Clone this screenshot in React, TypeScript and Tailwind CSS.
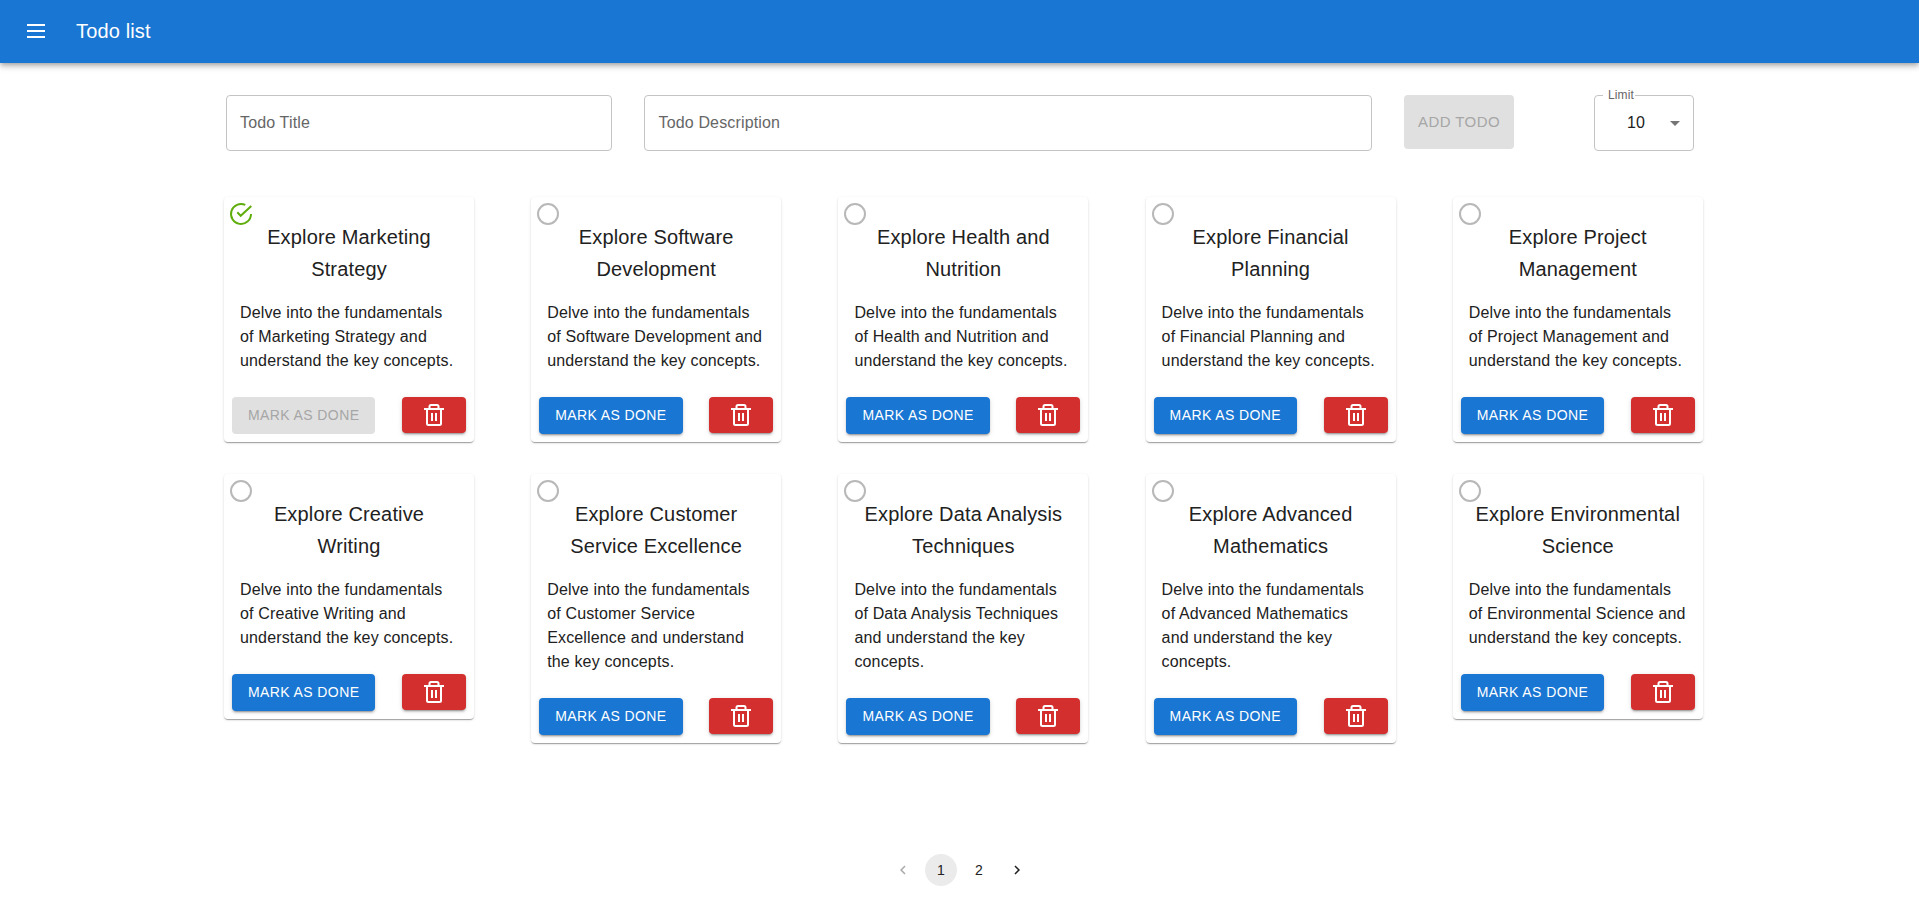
import React from "react";

const todos = [
  { topic: "Marketing Strategy", done: true },
  { topic: "Software Development", done: false },
  { topic: "Health and Nutrition", done: false },
  { topic: "Financial Planning", done: false },
  { topic: "Project Management", done: false },
  { topic: "Creative Writing", done: false },
  { topic: "Customer Service Excellence", done: false },
  { topic: "Data Analysis Techniques", done: false },
  { topic: "Advanced Mathematics", done: false },
  { topic: "Environmental Science", done: false },
];

const raised =
  "shadow-[0px_3px_1px_-2px_rgba(0,0,0,0.2),0px_2px_2px_0px_rgba(0,0,0,0.14),0px_1px_5px_0px_rgba(0,0,0,0.12)]";

function StatusIcon({ done }: { done: boolean }) {
  return (
    <div className="absolute left-1 top-1 size-[26px]">
      {done ? (
        <svg viewBox="0 0 26 26" className="size-full fill-none stroke-[#5fad0c] stroke-2">
          <path d="M23 13A10 10 0 1 1 17.3 3.95M23.3 5 12.7 14.8 9.3 11.3" />
        </svg>
      ) : (
        <svg viewBox="0 0 26 26" className="size-full fill-none stroke-[#b8b8b8] stroke-2">
          <circle cx="13" cy="13" r="10" />
        </svg>
      )}
    </div>
  );
}

function TrashIcon() {
  return (
    <svg viewBox="0 0 24 24" className="size-6 fill-none stroke-white stroke-2">
      <path d="M2 6h20M5 6v14.5A1.5 1.5 0 0 0 6.5 22h11a1.5 1.5 0 0 0 1.5-1.5V6M7.5 6V3.5A1.5 1.5 0 0 1 9 2h6A1.5 1.5 0 0 1 16.5 3.5V6M10 10v8M14 10v8" />
    </svg>
  );
}

function TodoCard({ topic, done }: { topic: string; done: boolean }) {
  return (
    <article className="relative w-[250px] rounded bg-white shadow-[0px_2px_1px_-1px_rgba(0,0,0,0.2),0px_1px_1px_0px_rgba(0,0,0,0.14),0px_1px_3px_0px_rgba(0,0,0,0.12)]">
      <StatusIcon done={done} />
      <div className="px-4 pb-4 pt-6">
        <h2 className="mb-4 text-center text-[20px] font-normal leading-8 tracking-[0.15px]">{`Explore ${topic}`}</h2>
        <p className="text-base leading-6 tracking-[0.15px]">
          {`Delve into the fundamentals of ${topic} and understand the key concepts.`}
        </p>
      </div>
      <div className="flex items-start justify-between p-2">
        <button
          disabled={done}
          className={
            done
              ? "h-[36.5px] rounded bg-[#e0e0e0] px-4 text-[14px] tracking-[0.4px] text-[#a6a6a6]"
              : "h-[36.5px] rounded bg-[#1976d2] px-4 text-[14px] tracking-[0.4px] text-white " + raised
          }
        >
          MARK AS DONE
        </button>
        <button className={"flex h-9 w-16 items-center justify-center rounded bg-[#d32f2f] " + raised}>
          <TrashIcon />
        </button>
      </div>
    </article>
  );
}

export default function App() {
  return (
    <div className="min-h-[907px] bg-white font-['Liberation_Sans',Arial,sans-serif] text-[#212121]">
      <header className="flex h-[63px] items-center bg-[#1976d2] pb-px pl-6 text-white shadow-[0px_2px_4px_-1px_rgba(0,0,0,0.2),0px_4px_5px_0px_rgba(0,0,0,0.14),0px_1px_10px_0px_rgba(0,0,0,0.12)]">
        <svg viewBox="0 0 24 24" className="size-6 fill-white">
          <path d="M3 5h18v2H3zm0 6h18v2H3zm0 6h18v2H3z" />
        </svg>
        <h1 className="ml-7 text-[20px] leading-8 tracking-[0.15px]">Todo list</h1>
      </header>
      <form className="mt-8 flex pl-[226px]">
        <div className="flex h-14 w-[386px] items-center rounded border border-[#c4c4c4] px-[13px] text-base tracking-[0.15px] text-[#666]">
          Todo Title
        </div>
        <div className="ml-8 flex h-14 w-[728px] items-center rounded border border-[#c4c4c4] px-[13.5px] text-base tracking-[0.15px] text-[#666]">
          Todo Description
        </div>
        <button disabled className="ml-8 h-[54px] w-[110px] rounded bg-[#e0e0e0] text-[15px] tracking-[0.43px] text-[#a6a6a6]">
          ADD TODO
        </button>
        <div className="relative ml-20 flex h-14 w-[100px] items-center rounded border border-[#c4c4c4] pl-8">
          <span className="absolute -top-2 left-2 bg-white pl-[5px] pr-px text-xs leading-[14px] tracking-[0.11px] text-[#666]">
            Limit
          </span>
          <span className="text-base tracking-[0.15px]">10</span>
          <svg viewBox="0 0 24 24" className="ml-[18px] size-6 fill-[#757575]">
            <path d="m7 10 5 5 5-5z" />
          </svg>
        </div>
      </form>
      <main className="ml-[224px] mt-[46px] grid w-[1536px] grid-cols-5 items-start gap-y-[32.5px]">
        {todos.map((todo) => (
          <TodoCard key={todo.topic} {...todo} />
        ))}
      </main>
      <nav className="mt-[111.5px] flex items-center justify-center gap-1.5 pl-px text-sm tracking-[0.15px]">
        <span className="flex size-8 items-center justify-center">
          <svg viewBox="0 0 24 24" className="size-[18px] fill-[#aaa]">
            <path d="M15.41 7.41 14 6l-6 6 6 6 1.41-1.41L10.83 12z" />
          </svg>
        </span>
        <span className="flex size-8 items-center justify-center rounded-full bg-[#ebebeb]">1</span>
        <span className="flex size-8 items-center justify-center">2</span>
        <span className="flex size-8 items-center justify-center">
          <svg viewBox="0 0 24 24" className="size-[18px] fill-[#212121]">
            <path d="M10 6 8.59 7.41 13.17 12l-4.58 4.59L10 18l6-6z" />
          </svg>
        </span>
      </nav>
    </div>
  );
}
